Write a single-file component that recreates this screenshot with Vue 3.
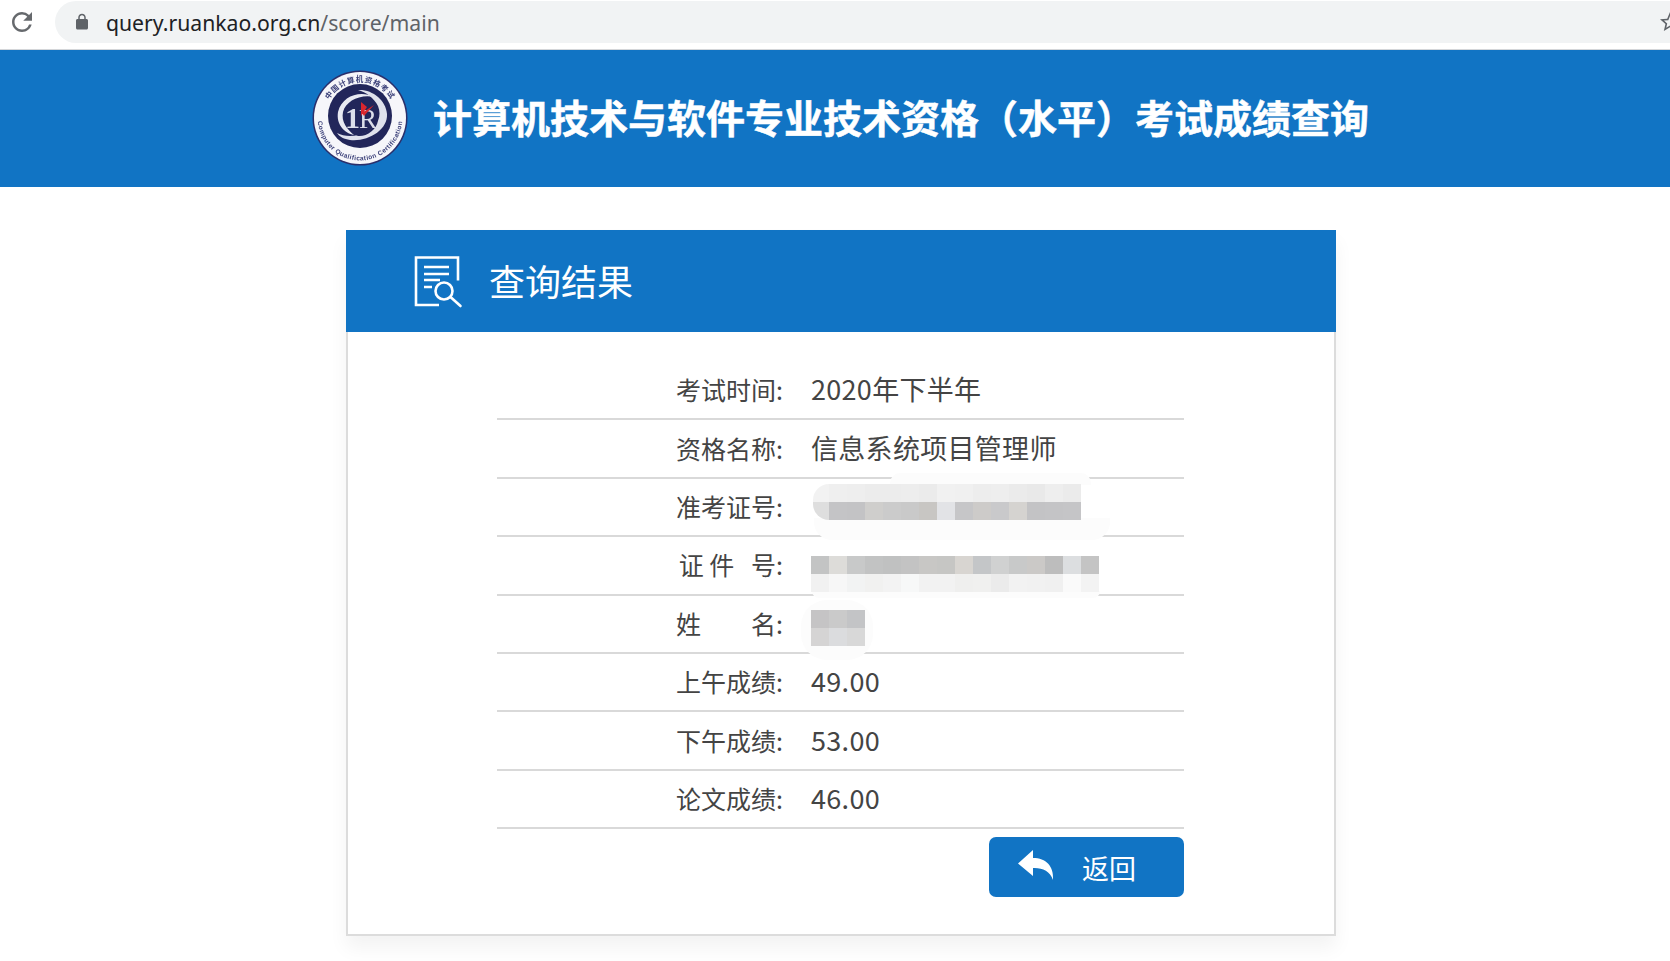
<script setup>
const rows = [
  { label: '考试时间:', value: '2020年下半年' },
  { label: '资格名称:', value: '信息系统项目管理师' },
  {
    label: '准考证号:', top: 5, lead: true,
    mosaic: [
      ['#efefef','#eeeeee','#ececec','#ececec','#ededed','#ebebeb','#f1f1f1','#f0f0f0','#ededed','#eeeeee','#ebebeb','#e9e9e9','#eeeeee','#ebebeb'],
      ['#c4c4c6','#c3c3c5','#cfcecc','#cbcbcb','#c9c9c9','#c8c6c3','#e2e3e6','#c6c6c8','#cdcbc9','#c9c9cb','#d5d3d0','#c3c3c5','#c4c4c6','#c5c5c7'],
    ],
  },
  {
    label: '证 件   号:', top: 19,
    mosaic: [
      ['#c3c4c4','#dddcd9','#c8c9c9','#c2c3c3','#c0c1c1','#c3c3c3','#c8c7c5','#c6c6c4','#d8d5d1','#c4c6c8','#d0d1d1','#c8c9c9','#cbc9c7','#bdbdbd','#dcdee0','#c4c4c4'],
      ['#f1f1f1','#f7f7f7','#f2f3f3','#f1f1f0','#f3f3f3','#f7f8f8','#f2f2f2','#f2f2f2','#efefee','#f0f0ef','#ebebeb','#f2f2f2','#f1f1f1','#f0f0f0','#fafafa','#f3f3f3'],
    ],
  },
  {
    label: '姓\u3000\u3000名:', top: 14,
    mosaic: [
      ['#c5c4c5','#cacaca','#c3c4c6'],
      ['#d5d4d4','#dbdcde','#d8d8d8'],
    ],
  },
  { label: '上午成绩:', value: '49.00' },
  { label: '下午成绩:', value: '53.00' },
  { label: '论文成绩:', value: '46.00' },
]
</script>

<template>
  <div class="page">
    <div class="browser">
      <svg class="reload" viewBox="0 0 24 24"><path d="M17.65 6.35A7.958 7.958 0 0 0 12 4c-4.42 0-7.99 3.58-7.99 8s3.57 8 7.99 8c3.73 0 6.84-2.55 7.73-6h-2.08A5.99 5.99 0 0 1 12 18c-3.31 0-6-2.69-6-6s2.69-6 6-6c1.66 0 3.14.69 4.22 1.78L13 11h7V4l-2.35 2.35z"/></svg>
      <div class="pill">
        <svg class="lock" viewBox="0 0 24 24"><path d="M18 8h-1V6c0-2.76-2.24-5-5-5S7 3.24 7 6v2H6c-1.1 0-2 .9-2 2v10c0 1.1.9 2 2 2h12c1.1 0 2-.9 2-2V10c0-1.1-.9-2-2-2zM9 6c0-1.66 1.34-3 3-3s3 1.34 3 3v2H9V6z"/></svg>
        <span class="url"><span class="host">query.ruankao.org.cn</span>/score/main</span>
        <svg class="star" viewBox="0 0 24 24"><path d="M22 9.24l-7.19-.62L12 2 9.19 8.63 2 9.24l5.46 4.73L5.82 21 12 17.27 18.18 21l-1.63-7.03L22 9.24zM12 15.4l-3.76 2.27 1-4.28-3.32-2.88 4.38-.38L12 6.1l1.71 4.04 4.38.38-3.32 2.88 1 4.28L12 15.4z"/></svg>
      </div>
    </div>

    <header class="banner">
      <svg class="logo" viewBox="0 0 96 96">
        <defs>
          <path id="arcTop" d="M12 48A36 36 0 0 1 84 48"/>
          <path id="arcBottom" d="M6.800 38A42.400 42.400 0 1 0 89.200 38"/>
        </defs>
        <circle cx="48" cy="48" r="47.500" fill="#2a2f6b"/>
        <circle cx="48" cy="48" r="46" fill="#f6f6fa"/>
        <circle cx="48" cy="46" r="32" fill="#22265a"/>
        <text class="ring-top"><textPath href="#arcTop" startOffset="50%" text-anchor="middle">中国计算机资格考试</textPath></text>
        <text class="ring-bottom"><textPath href="#arcBottom" startOffset="50%" text-anchor="middle">Computer Qualification Certification</textPath></text>
        <path d="M62 27C48 20 30 26 26 42C24 54 32 63 42 65C35 59 29 52 31 42C34 31 48 24 62 27Z" fill="#e8e9f2"/>
        <path d="M46 20C60 19 74 30 75 44C76 60 56 72 38 70C32 69 28 67 25 63C33 67 44 67 55 62C66 56 70 46 66 36C62 28 54 22 46 20Z" fill="#dfe1ec"/>
        <path d="M40 63C50 66 60 61 66 50C65 60 54 67 46 66Z" fill="#22265a"/>
        <text x="33" y="58" class="logo-mark">1<tspan class="logo-r" dx="-1">R</tspan></text>
        <path d="M49 32L55 37L49 46ZM62 35L52 46L50 43Z" fill="#d9262e"/>
      </svg>
      <h1 class="title">计算机技术与软件专业技术资格（水平）考试成绩查询</h1>
    </header>

    <main class="card">
      <div class="card-head">
        <svg class="doc" viewBox="0 0 50 52" fill="none" stroke="#fff" stroke-width="2.600">
          <path d="M25 49H2V1.500h42v23"/>
          <path d="M10 11h25M10 18h25M10 24h16M10 31h8"/>
          <circle cx="30" cy="35" r="8.500"/>
          <path d="M36.500 41l10 9" stroke-linecap="round"/>
        </svg>
        <h2 class="card-title">查询结果</h2>
      </div>

      <div class="table">
        <div class="smudge s1"></div>
        <div class="smudge s2"></div>
        <div class="smudge s3"></div>
        <div class="smudge s4"></div>

        <div v-for="row in rows" :key="row.label" class="row">
          <span class="label">{{ row.label }}</span>
          <span v-if="row.value" class="value">{{ row.value }}</span>
          <div v-else class="mosaic" :class="{ 'has-lead': row.lead }" :style="{ marginTop: row.top + 'px' }">
            <div v-for="(band, b) in row.mosaic" :key="b" class="band">
              <i v-for="(c, i) in band" :key="i" :style="{ background: c }"></i>
            </div>
          </div>
        </div>

        <div class="actions">
          <button class="back" type="button">
            <svg class="reply" viewBox="0 0 36 30"><path d="M15 0L0 13.500 15 26V18C24 17.500 32 21 35 30C36 16 28 8 15 8Z" fill="#fff"/></svg>
            <span>返回</span>
          </button>
        </div>
      </div>
    </main>
  </div>
</template>

<style>
html, body {
  margin: 0;
  background: #fff;
  overflow: hidden;
}
</style>

<style scoped>
.page {
  width: 1682px;
  height: 961px;
  font-family: "Noto Sans CJK SC", "Noto Sans", sans-serif;
}

.browser {
  height: 49px;
  border-bottom: 1px solid #d4d6d9;
  display: flex;
  align-items: flex-start;
  background: #fff;
}
.reload {
  width: 30px;
  height: 30px;
  margin: 7px 0 0 7px;
  fill: #66696d;
  flex: none;
}
.pill {
  flex: 1;
  height: 42px;
  margin: 1px 0 0 18px;
  border-radius: 21px 0 0 21px;
  background: #f1f3f4;
  display: flex;
  align-items: center;
}
.lock {
  width: 18px;
  height: 18px;
  margin-left: 18px;
  fill: #5f6368;
  flex: none;
}
.url {
  margin-left: 15px;
  font-family: "Noto Sans", sans-serif;
  font-size: 21.200px;
  color: #5f6368;
  white-space: nowrap;
}
.host {
  color: #202124;
}
.star {
  width: 24px;
  height: 24px;
  margin-left: auto;
  fill: #5f6368;
  flex: none;
}

.banner {
  height: 137px;
  padding-right: 1px;
  background: #1174c4;
  display: flex;
  align-items: center;
  justify-content: center;
  gap: 25px;
}
.logo {
  width: 96px;
  height: 96px;
  flex: none;
  filter: blur(0.35px);
  margin-top: -2px;
}
.ring-top {
  font-size: 7.500px;
  font-weight: 700;
  fill: #3a3f78;
  letter-spacing: 0.8px;
}
.ring-bottom {
  font-family: "Liberation Sans", sans-serif;
  font-size: 6.500px;
  font-weight: 700;
  fill: #3a3f78;
  letter-spacing: 0.4px;
}
.logo-mark {
  font-family: "Liberation Serif", serif;
  font-size: 30px;
  font-weight: 700;
  fill: #dcdeea;
}
.logo-r {
  font-size: 27px;
  font-weight: 400;
}
.title {
  margin: -5px 0 0;
  font-size: 39px;
  line-height: 50px;
  font-weight: 700;
  color: #fff;
  white-space: nowrap;
  -webkit-text-stroke: 0.5px #fff;
}

.card {
  width: 990px;
  height: 706px;
  box-sizing: border-box;
  margin: 43px auto 0;
  background: #fff;
  border: 2px solid #dcdcdc;
  border-top: 0;
  box-shadow: 0 12px 18px rgba(0, 0, 0, 0.05);
}
.card-head {
  height: 102px;
  margin: 0 -2px;
  background: #1174c4;
  display: flex;
  align-items: center;
  padding-left: 68px;
}
.doc {
  width: 50px;
  height: 52px;
  flex: none;
  margin-top: 2px;
}
.card-title {
  margin: -2px 0 0 25px;
  font-size: 36px;
  line-height: 50px;
  font-weight: 400;
  color: #fff;
}

.table {
  position: relative;
  width: 687px;
  margin: 30px 0 0 149px;
}
.row {
  height: 58.400px;
  box-sizing: border-box;
  border-bottom: 2px solid #d9d9d9;
  display: flex;
  align-items: center;
}
.label {
  width: 286px;
  margin-top: -2px;
  box-sizing: border-box;
  text-align: right;
  font-size: 25px;
  line-height: 34px;
  color: #444;
  white-space: pre;
  flex: none;
}
.value {
  margin-left: 28px;
  margin-top: -2px;
  font-size: 27px;
  letter-spacing: 0.3px;
  line-height: 38px;
  color: #444;
  white-space: nowrap;
}
.mosaic {
  position: relative;
  z-index: 1;
  align-self: flex-start;
  margin-left: 28px;
}
.mosaic.has-lead {
  padding-left: 16px;
  margin-left: 30px;
  border-radius: 16px 0 0 16px;
  background: linear-gradient(#f2f2f2 50%, #dedede 50%);
}
.band {
  display: flex;
  height: 18px;
}
.band i {
  display: block;
  width: 18px;
  height: 18px;
  flex: none;
}

.smudge {
  position: absolute;
  background: #fcfcfc;
}
.s1 {
  left: 393px;
  top: 111px;
  width: 201px;
  height: 12px;
  border-radius: 10px 10px 0 0;
}
.s2 {
  left: 317px;
  top: 156px;
  width: 296px;
  height: 22px;
  border-radius: 0 0 18px 18px;
}
.s3 {
  left: 315px;
  top: 229px;
  width: 288px;
  height: 7px;
  border-radius: 0 0 8px 8px;
}
.s4 {
  left: 304px;
  top: 238px;
  width: 72px;
  height: 60px;
  border-radius: 26px;
}

.actions {
  display: flex;
  justify-content: flex-end;
  margin-top: 8px;
}
.back {
  width: 195px;
  height: 60px;
  padding: 0 0 0 29px;
  border: 0;
  border-radius: 7px;
  background: #1174c4;
  color: #fff;
  font-family: inherit;
  font-size: 27px;
  display: flex;
  align-items: center;
}
.reply {
  width: 36px;
  height: 30px;
  flex: none;
  margin-top: -5px;
}
.back span {
  margin-left: 28px;
}
</style>
